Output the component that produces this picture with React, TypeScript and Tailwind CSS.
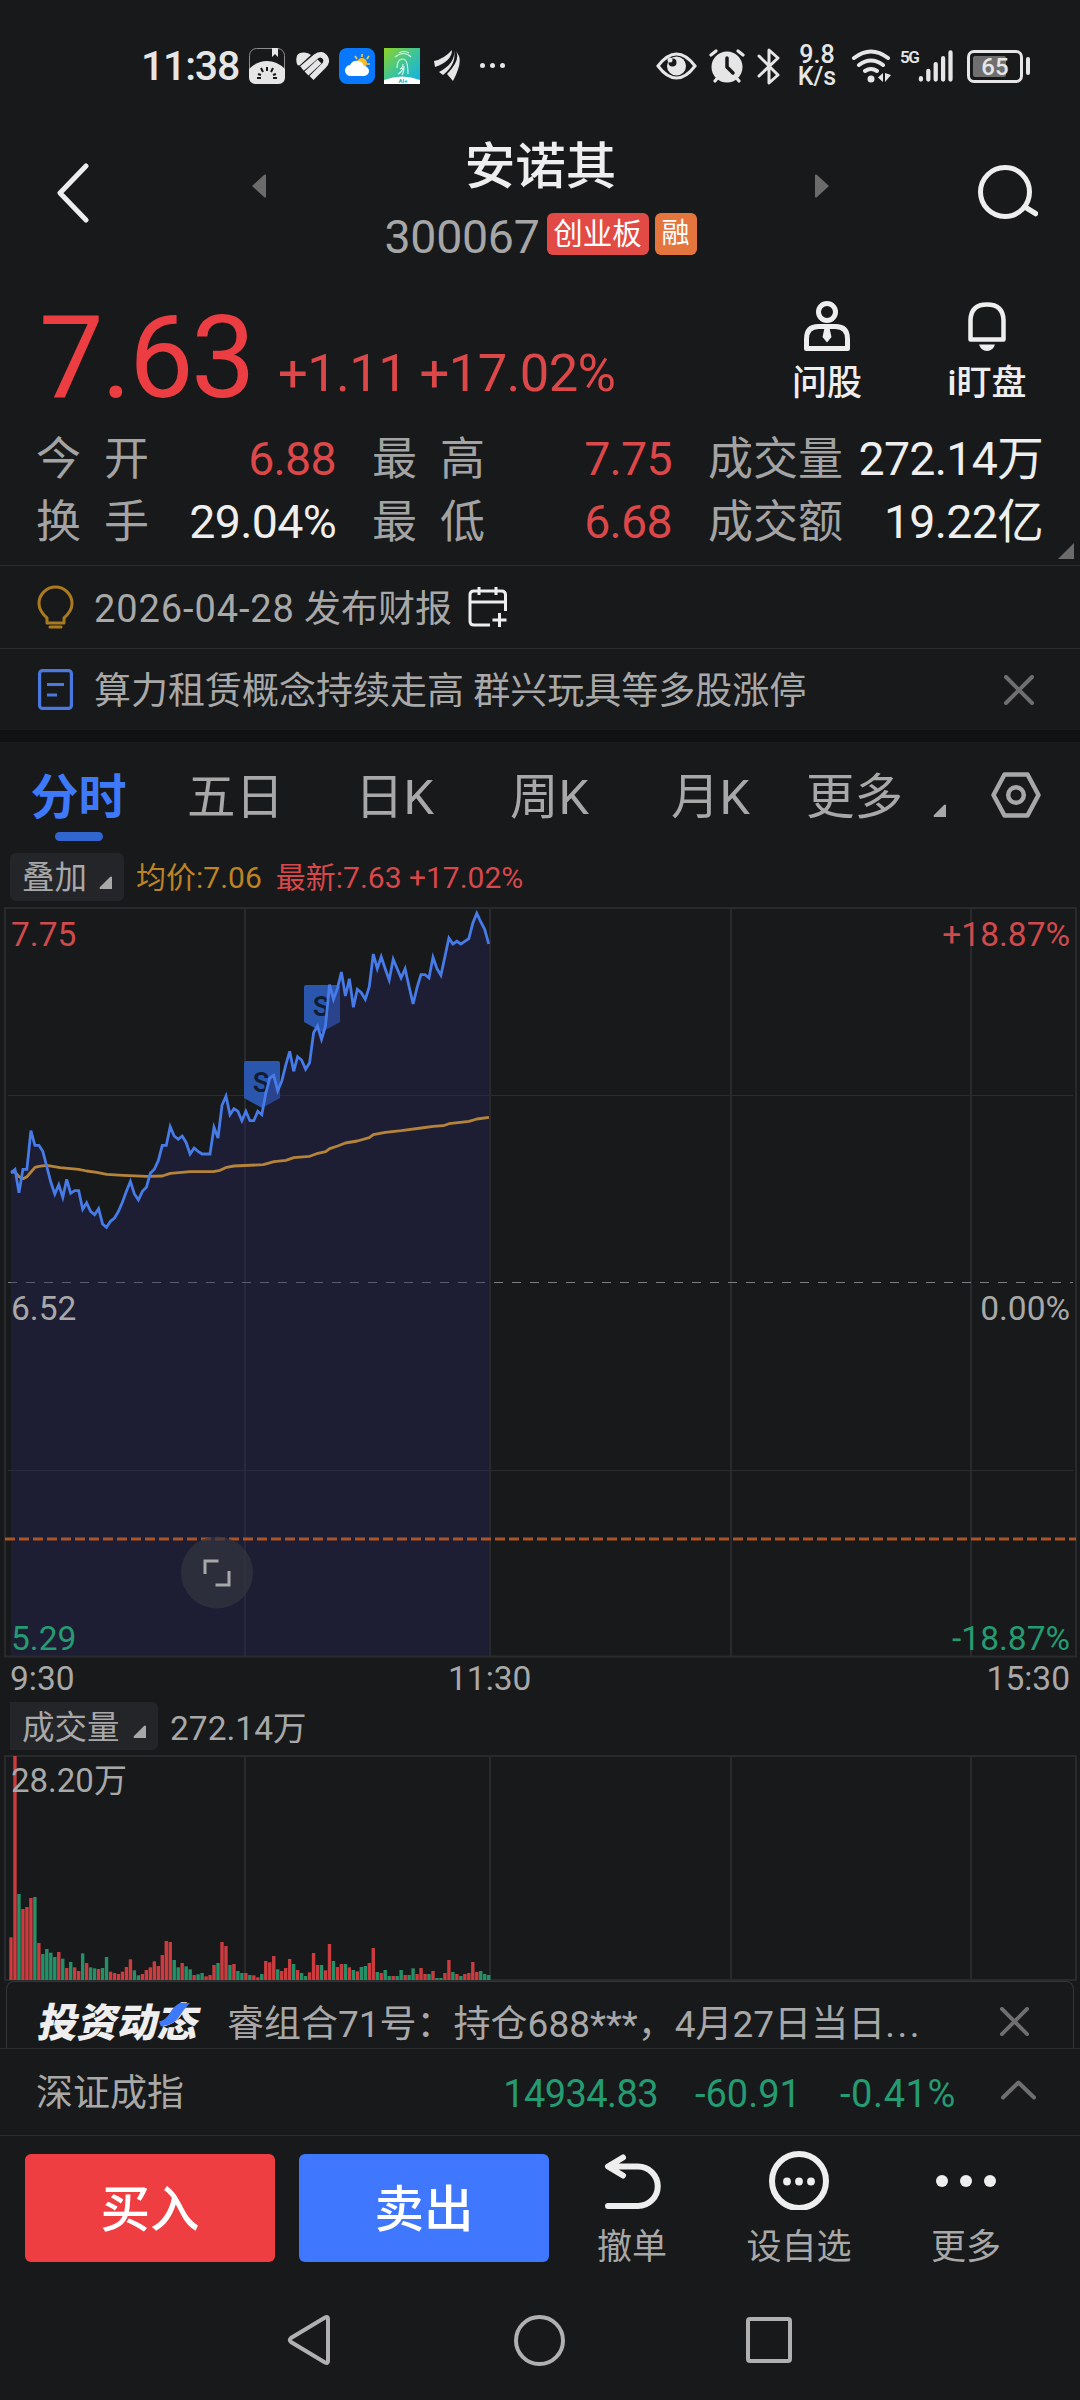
import type { ReactNode } from "react";

// one value per minute, 9:30 → 11:30, in thirds of a pixel below the plot origin
const PRICE = [
  848, 838, 908, 838, 838, 722, 766, 766, 784, 830, 876, 912, 884, 922, 868, 910, 902, 902, 958, 938, 964, 974, 956,
  1002, 1012, 994, 984, 964, 936, 904, 874, 912, 930, 904, 892, 850, 838, 812, 766, 766, 710, 738, 748, 738, 758, 792,
  774, 784, 792, 792, 792, 712, 744, 646, 618, 674, 656, 664, 692, 664, 692, 692, 664, 674, 610, 564, 556, 602, 574,
  526, 484, 544, 500, 510, 538, 518, 428, 408, 448, 408, 284, 328, 296, 246, 318, 266, 352, 298, 308, 328, 290, 192,
  236, 200, 236, 270, 208, 236, 264, 236, 290, 342, 292, 254, 254, 264, 202, 236, 256, 200, 144, 162, 154, 162, 154,
  146, 100, 70, 96, 118, 162,
];

const AVERAGE = [
  [33, 846], [45, 846], [57, 860], [69, 866], [81, 860], [93, 846], [105, 832], [117, 829], [140, 826], [180, 833],
  [236, 838], [260, 843], [290, 847], [320, 853], [370, 856], [440, 859], [487, 858], [511, 850], [571, 845],
  [640, 845], [660, 841], [680, 832], [702, 828], [790, 824], [822, 815], [858, 811], [881, 803], [929, 799],
  [950, 791], [977, 785], [989, 776], [1013, 768], [1036, 759], [1072, 753], [1108, 743], [1120, 734], [1156, 727],
  [1204, 722], [1264, 714], [1300, 709], [1330, 707], [1347, 701], [1407, 694], [1431, 687], [1467, 682],
];

const VOLUME =
  "r592 r48 g462 r507 r501 r474 g471 r609 g642 g627 g638 g651 r636 g656 r684 g666 r682 r693 g640 r669 g682 g685 r687 g684 g651 r695 r699 r702 r695 r681 r658 g691 g706 r702 r690 r682 r664 r678 r645 r603 r606 g660 g682 r669 g679 g688 r705 g703 g699 r709 r705 r675 g669 r606 r618 g675 r672 g693 g699 r699 g705 r706 r712 g702 r663 r667 r648 g688 r693 r684 r657 g672 r690 g699 g708 r697 r639 r675 g675 r691 r612 g663 r681 r672 g672 r682 g690 r694 g681 g678 r669 r624 g696 r699 g690 g708 r708 g708 g690 r705 g705 g685 r702 r684 r702 g702 r693 g714 g714 r699 r660 g696 r702 g708 r702 r699 r666 r696 g693 g702 g705".split(
    " ",
  );

const STEP = 3.981;
const GRID_X = [245, 490, 731, 971];

const TABS = [
  { label: "五日", width: "w-[168px]" },
  { label: "日K", width: "w-[155px]" },
  { label: "周K", width: "w-[161px]" },
  { label: "月K", width: "w-[135px]" },
  { label: "更多", width: "w-[127px]" },
];

function minuteX(index: number) {
  return 11 + index * STEP;
}

function StatusBar() {
  return (
    <div className="flex h-[132px] items-center pl-[141px] pr-[50px] text-[#e6e6e6]">
      <span className="w-[100px] text-[41px] font-medium leading-none tracking-[-1.200px]">11:38</span>
      <svg className="ml-2 shrink-0" width="36" height="36" viewBox="0 0 36 36">
        <rect x="0.5" y="0.5" width="35" height="35" rx="7" fill="none" stroke="#8d8d8d" />
        <path d="M23 0h6v9l-3-3-3 3z" fill="#e6e6e6" />
        <path d="M0 21Q8 13 18 13t18 8v8q0 7-7 7H7q-7 0-7-7z" fill="#e6e6e6" />
        <path d="M18 19v4M12 20l2 4M24 20l-2 4M9 26l3 1M27 26l-3 1M8 30h4M24 30h4" stroke="#17191a" strokeWidth="2" />
      </svg>
      <svg className="ml-[11px] shrink-0" width="33" height="28" viewBox="0 0 33 28">
        <path d="M1 12Q-2 1 7 0.500q5-.5 8 2.500L3.500 13.500q-2 0-2.500-1.500z" fill="#e6e6e6" />
        <g fill="none" stroke="#e6e6e6" strokeWidth="5.600">
          <path d="M6 16.500L20 4.500q6-4 9.500 1.500 2 4-1.500 7.500L15.500 26" />
          <path d="M10.500 21.500L23.500 9.500" />
        </g>
      </svg>
      <svg className="ml-[10px] shrink-0" width="36" height="36" viewBox="0 0 36 36">
        <rect width="36" height="36" rx="8" fill="#0878ff" />
        <g stroke="#f7c948" strokeWidth="1.600">
          <path d="M23 6v3M16 8l2 3M30 8l-2 3M28 16h3" />
        </g>
        <circle cx="23" cy="15" r="5" fill="#fbbf24" />
        <path d="M12 28a5.500 5.500 0 0 1-1-11 7.500 7.500 0 0 1 14 1 5 5 0 0 1 0 10z" fill="#fff" />
      </svg>
      <svg className="ml-[9px] shrink-0" width="36" height="36" viewBox="0 0 36 36">
        <defs>
          <linearGradient id="scan" x1="0" y1="0" x2="1" y2="1">
            <stop offset="0" stopColor="#8fd424" />
            <stop offset="0.500" stopColor="#3cc49a" />
            <stop offset="1" stopColor="#10aef0" />
          </linearGradient>
        </defs>
        <rect width="36" height="36" fill="url(#scan)" />
        <path d="M0 32Q18 25 36 32v4H0z" fill="#fff" />
        <g fill="none" stroke="#d9f7ec" strokeWidth="1.100">
          <path d="M15 5q5-3 10 0M11 9q9-7 16 0M13 20q0-9 6-9 5 0 5 15M16 21q3-1 3-5M14 26q4-2 5-6M20 18q0 6-2 9" />
        </g>
        <text x="19" y="35" fontSize="6" fontWeight="700" fill="#2aa7b8" textAnchor="middle">AI+</text>
      </svg>
      <svg className="ml-[14px] shrink-0" width="27" height="32" viewBox="0 0 27 32" fill="#e6e6e6">
        <path d="M0 11Q10 9 18 0q0 11-17 17z" />
        <path d="M20 0q2 13-15 22l4 3Q23 14 20 0z" />
        <path d="M22 1q5 9-9 23l6 7q9-17 6-25z" />
      </svg>
      <div className="ml-[19px] mt-[-2px] flex gap-[5px]">
        <i className="h-[5px] w-[5px] rounded-full bg-[#e6e6e6]" />
        <i className="h-[5px] w-[5px] rounded-full bg-[#e6e6e6]" />
        <i className="h-[5px] w-[5px] rounded-full bg-[#e6e6e6]" />
      </div>

      <div className="ml-auto flex items-center">
        <svg width="41" height="28" viewBox="0 0 41 28">
          <path d="M2 14Q11 2 20.500 2T39 14Q30 26 20.500 26T2 14z" fill="none" stroke="#e6e6e6" strokeWidth="3" />
          <circle cx="20.500" cy="14" r="9.500" fill="#e6e6e6" />
          <circle cx="16.500" cy="10.500" r="4" fill="#17191a" />
          <circle cx="14" cy="8" r="2.500" fill="#e6e6e6" />
        </svg>
        <svg className="ml-[12px]" width="36" height="34" viewBox="0 0 36 34">
          <circle cx="18" cy="18" r="15.500" fill="#e6e6e6" />
          <path d="M2 6l5-4M34 6l-5-4M6 32l4-5M30 32l-4-5" stroke="#e6e6e6" strokeWidth="3.200" strokeLinecap="round" />
          <path d="M18 9v9l6 6" fill="none" stroke="#17191a" strokeWidth="3.500" strokeLinecap="round" />
        </svg>
        <svg className="ml-[12px]" width="23" height="37" viewBox="0 0 23 37" fill="none" stroke="#e6e6e6" strokeWidth="3">
          <path d="M2 8l19 19-9 8V2l9 8L2 28" strokeLinecap="round" strokeLinejoin="round" />
        </svg>
        <div className="ml-[17px] w-[40px] text-center text-[25px] font-medium leading-[22px]">
          <div>9.8</div>
          <div>K/s</div>
        </div>
        <svg className="ml-[14px]" width="42" height="34" viewBox="0 0 42 34">
          <g fill="none" stroke="#e6e6e6" strokeWidth="4" strokeLinecap="round">
            <path d="M3 9Q20-4 37 9M8 16q12-9 24 0M14 22q6-4 12 0" />
          </g>
          <circle cx="20" cy="30" r="3.500" fill="#e6e6e6" />
          <path d="M32 24v9l-5-4.500zM34 24l6 2-6 7z" fill="#e6e6e6" />
        </svg>
        <div className="ml-[7px] flex w-[54px] items-start justify-between">
          <span className="w-[18px] whitespace-nowrap text-[17px] font-semibold leading-[18px] tracking-[-1.500px]">5G</span>
          <svg width="37" height="36" viewBox="0 0 37 36" stroke="#e6e6e6" strokeWidth="4.400" strokeLinecap="round">
            <path d="M3 30.500v1.500M10.600 23v9M18.200 16v16M25.800 10v22M33.400 4v28" />
          </svg>
        </div>
        <div className="ml-[13px] flex items-center">
          <div className="relative h-[33px] w-[56px] rounded-[7px] border-[3px] border-[#e6e6e6] p-[3px]">
            <div className="h-full w-[33px] rounded-[2px] bg-[#6f6f6f]" />
            <span className="absolute inset-0 text-center text-[24px] font-medium leading-[28px]">65</span>
          </div>
          <div className="ml-[3px] h-[18px] w-[4px] rounded-full bg-[#e6e6e6]" />
        </div>
      </div>
    </div>
  );
}

function Header() {
  return (
    <div className="flex h-[138px] pl-[56px] pr-[42px]">
      <svg className="mt-[31px]" width="34" height="60" viewBox="0 0 34 60" fill="none" stroke="#eee" strokeWidth="5">
        <path d="M30 3L4 30l26 27" strokeLinecap="round" strokeLinejoin="round" />
      </svg>
      <svg className="ml-[162px] mt-[42px]" width="14" height="24" viewBox="0 0 14 24">
        <path d="M14 1v22q-1 1-2 0L0 12 12 1q1-1 2 0z" fill="#6b6b6b" />
      </svg>
      <div className="flex w-[549px] flex-col items-center">
        <div className="mt-[9px] text-[50.500px] font-medium leading-[52px] text-[#eee]">安诺其</div>
        <div className="mt-[20px] flex h-[42px] items-start">
          <span className="mt-[3px] text-[46.500px] leading-[42px] tracking-[-0.300px] text-[#a6a6a6]">300067</span>
          <span className="ml-[7px] h-[42px] w-[102px] rounded-[6px] bg-[#e14a45] text-center text-[29.500px] leading-[42px] text-white">
            创业板
          </span>
          <span className="ml-[6px] h-[42px] w-[42px] rounded-[6px] bg-[#e4753c] text-center text-[28px] leading-[42px] text-white">
            融
          </span>
        </div>
      </div>
      <svg className="mt-[42px]" width="14" height="24" viewBox="0 0 14 24">
        <path d="M0 1v22q1 1 2 0l12-11L2 1Q1 0 0 1z" fill="#6b6b6b" />
      </svg>
      <svg className="ml-auto mt-[33px]" width="60" height="54" viewBox="0 0 60 54" fill="none" stroke="#eee">
        <circle cx="27" cy="27" r="24.500" strokeWidth="5" />
        <path d="M47 42l10.500 6.500" strokeWidth="5.500" strokeLinecap="round" />
      </svg>
    </div>
  );
}

function QuoteAction({ label, className, children }: { label: string; className: string; children: ReactNode }) {
  return (
    <div className={`flex flex-col items-center ${className}`}>
      {children}
      <span className="mt-[14px] whitespace-nowrap text-[35px] font-medium leading-[38px] text-[#eee]">{label}</span>
    </div>
  );
}

function Stat({ label, value, tone, width }: { label: string; value: string; tone: string; width: string }) {
  return (
    <div className={`flex items-center justify-between whitespace-nowrap ${width}`}>
      <span className="flex w-[113px] shrink-0 justify-between text-[45px] text-[#a3a3a3]">
        {label.length === 2 ? label.split("").map((char) => <i key={char} className="not-italic">{char}</i>) : label}
      </span>
      <span className={`text-[46.500px] tracking-[-0.700px] ${tone}`}>{value}</span>
    </div>
  );
}

function Quote() {
  return (
    <section className="relative h-[296px] border-b border-[#2a2c2e]">
      <div className="flex h-[158px] pl-[39px]">
        <div className="mt-[30px] w-[239px] text-[115px] leading-[116px] tracking-[-2.500px] text-[#ec3e42]">7.63</div>
        <div className="mt-[73px] w-[340px] whitespace-nowrap text-[52.500px] leading-[60px] tracking-[-0.600px] text-[#dc4749]">
          +1.11 +17.02%
        </div>
        <QuoteAction label="问股" className="ml-[169px] mt-[31px] w-[80px]">
          <svg width="46" height="50" viewBox="0 0 46 50" fill="none" stroke="#eee" strokeWidth="5">
            <circle cx="23" cy="11" r="8.500" />
            <path d="M2.500 47.500V38q0-12.500 12-12.500h17q12 0 12 12.500v9.500z" strokeLinejoin="round" />
            <path d="M20.500 27h5l2 9-4.500 5.500L18.500 36z" fill="#eee" stroke="none" />
          </svg>
        </QuoteAction>
        <QuoteAction label="i盯盘" className="ml-[80px] mt-[31px] w-[80px]">
          <svg width="38" height="50" viewBox="0 0 38 50" fill="none" stroke="#eee" strokeWidth="4.500">
            <path d="M2.500 38.500V19Q3 3.500 19 3.500T35.500 19v19.500z" strokeLinejoin="round" />
            <path d="M11 43.500h16q-2 6.500-8 6.500t-8-6.500z" fill="#eee" stroke="none" />
          </svg>
        </QuoteAction>
      </div>
      <div className="flex h-[126px] flex-col pl-[36px] leading-[63px]">
        <div className="flex">
          <Stat label="今开" value="6.88" tone="text-[#dc4749]" width="w-[300px]" />
          <Stat label="最高" value="7.75" tone="text-[#dc4749]" width="ml-[36px] w-[300px]" />
          <Stat label="成交量" value="272.14万" tone="text-[#eee]" width="ml-[36px] w-[335px]" />
        </div>
        <div className="flex">
          <Stat label="换手" value="29.04%" tone="text-[#eee]" width="w-[300px]" />
          <Stat label="最低" value="6.68" tone="text-[#dc4749]" width="ml-[36px] w-[300px]" />
          <Stat label="成交额" value="19.22亿" tone="text-[#eee]" width="ml-[36px] w-[335px]" />
        </div>
      </div>
      <svg className="absolute bottom-[6px] right-[6px]" width="16" height="16" viewBox="0 0 16 16">
        <path d="M16 0v16H0z" fill="#6b6b6b" />
      </svg>
    </section>
  );
}

function CloseIcon({ size }: { size: number }) {
  return (
    <svg width={size} height={size} viewBox="0 0 30 30" stroke="#6f6f6f" strokeWidth="4" strokeLinecap="round">
      <path d="M2 2l26 26M28 2L2 28" />
    </svg>
  );
}

function News() {
  return (
    <section className="text-[37px] text-[#a8a8a8]">
      <div className="flex h-[83px] items-center border-b border-[#2a2c2e] pl-[37px]">
        <svg width="37" height="44" viewBox="0 0 37 44" fill="none" stroke="#ab7a1e" strokeWidth="3" strokeLinecap="round">
          <path d="M10 38v-5Q2 26 2 18.500a16.500 16.500 0 0 1 33 0Q35 26 27 33v5zM13 42h11" strokeLinejoin="round" />
        </svg>
        <span className="ml-[20px] mt-[3px] leading-none">
          <span className="text-[38px] tracking-[0.900px]">2026-04-28</span> 发布财报
        </span>
        <svg className="ml-[16px]" width="40" height="42" viewBox="0 0 40 42" fill="none" stroke="#eee" strokeWidth="3">
          <path d="M37.500 25V9q0-4-4-4H6Q2 5 2 9v26q0 4 4 4h16M2 16h35.500M11 1v8M28 1v8M31.500 27v14M24.500 34h14" />
        </svg>
      </div>
      <div className="flex h-[81px] items-center pl-[38px] pr-[46px]">
        <svg width="35" height="41" viewBox="0 0 35 41" fill="none" stroke="#4a78e0" strokeWidth="3.200">
          <rect x="1.600" y="1.600" width="31.800" height="37.800" rx="3" />
          <path d="M9 15.500h17M9 26h10" />
        </svg>
        <span className="ml-[21px] mt-[3px] leading-none">算力租赁概念持续走高 群兴玩具等多股涨停</span>
        <span className="ml-auto">
          <CloseIcon size={30} />
        </span>
      </div>
      <div className="h-[12px] bg-[#101113]" />
    </section>
  );
}

function Corner() {
  return (
    <svg width="13" height="13" viewBox="0 0 13 13">
      <path d="M13 1v12H1q-1-1 0-2L11 1q1-1 2 0z" fill="#a8a8a8" />
    </svg>
  );
}

function Tabs() {
  return (
    <nav className="flex h-[108px] whitespace-nowrap pl-[31px] pt-[26px] text-[48.500px] leading-[60px] text-[#a8a8a8]">
      <div className="flex w-[95px] flex-col items-center text-[48px] font-bold text-[#3f79fb]">
        分时
        <i className="mt-[4px] h-[9px] w-[48px] rounded-full bg-[#3166d0]" />
      </div>
      <div className="ml-[61px] flex">
        {TABS.map((tab) => (
          <div key={tab.label} className={tab.width}>
            {tab.label}
          </div>
        ))}
      </div>
      <span className="mt-[36px] leading-none">
        <Corner />
      </span>
      <svg className="ml-[45px] mt-[4px]" width="50" height="46" viewBox="0 0 50 46" fill="none" stroke="#a8a8a8" strokeWidth="4.500">
        <path d="M13.500 2.500h23L47.500 23l-11 20.500h-23L2.500 23z" strokeLinejoin="round" />
        <circle cx="25" cy="23" r="7.800" />
      </svg>
    </nav>
  );
}

function Marker({ x, y }: { x: number; y: number }) {
  return (
    <g transform={`translate(${x} ${y})`}>
      <path d="M2 0h32q2 0 2 2v35L18 47 0 37V2q0-2 2-2z" fill="#2a57ad" />
      <text x="17" y="31" fontSize="27" fontWeight="600" fill="#111c33" textAnchor="middle">
        S
      </text>
    </g>
  );
}

function PriceChart() {
  const line = PRICE.map((y, i) => `${minuteX(i).toFixed(1)},${((y - 51) / 3).toFixed(1)}`).join(" ");
  const average = AVERAGE.map(([x, y]) => `${(x / 3).toFixed(1)},${((y - 51) / 3).toFixed(1)}`).join(" ");

  return (
    <div className="relative h-[751px] text-[33.500px] leading-none text-[#a8a8a8]">
      <svg width="1080" height="751" viewBox="0 0 1080 751" fill="none">
        <rect x="5" y="1" width="1071" height="748.500" stroke="#282a2d" strokeWidth="2" />
        <path d="M8 188.500H1073M8 563.500H1073" stroke="#2a2c2e" />
        {GRID_X.map((x) => (
          <path key={x} d={`M${x} 1V749`} stroke="#282a2d" strokeWidth="2" />
        ))}
        <path d="M8 375.500H1073" stroke="#7b7f83" strokeDasharray="9 9" />
        <Marker x={244} y={154} />
        <Marker x={304} y={78} />
        <polygon points={`11,749 ${line} 488.700,749`} fill="#28265a" fillOpacity="0.400" />
        <polyline points={average} stroke="#b5843a" strokeWidth="2.800" strokeLinejoin="round" />
        <polyline points={line} stroke="#467be8" strokeWidth="2.800" />
        <path d="M5 632H1076" stroke="#ab5428" strokeWidth="3" strokeDasharray="10 4" />
        <circle cx="217" cy="665.500" r="36" fill="#34343f" fillOpacity="0.700" />
        <path d="M205 667v-13h13.500M215.500 678H229v-14" stroke="#a8a8a8" strokeWidth="3" />
      </svg>
      <span className="absolute left-[11px] top-[11px] text-[#cf4a4c]">7.75</span>
      <span className="absolute right-[10px] top-[11px] text-[#cf4a4c]">+18.87%</span>
      <span className="absolute left-[11px] top-[385px]">6.52</span>
      <span className="absolute right-[10px] top-[385px]">0.00%</span>
      <span className="absolute bottom-[3px] left-[11px] text-[#259b72]">5.29</span>
      <span className="absolute bottom-[3px] right-[10px] text-[#259b72]">-18.87%</span>
    </div>
  );
}

function VolumeChart() {
  return (
    <div className="relative h-[226px]">
      <svg width="1080" height="226" viewBox="0 0 1080 226" fill="none">
        <rect x="5" y="1" width="1071" height="224" stroke="#282a2d" strokeWidth="2" />
        {GRID_X.map((x) => (
          <path key={x} d={`M${x} 1V225`} stroke="#282a2d" strokeWidth="2" />
        ))}
        {VOLUME.map((entry, i) => {
          const height = (720 - Number(entry.slice(1))) / 3;
          return (
            <rect
              key={i}
              x={minuteX(i) - 1.7}
              y={225 - height}
              width="3.400"
              height={height}
              fill={entry[0] === "r" ? "#cb3c3f" : "#259068"}
            />
          );
        })}
      </svg>
      <span className="absolute left-[11px] top-[9px] text-[33px] leading-none text-[#a8a8a8]">28.20万</span>
    </div>
  );
}

function Chart() {
  return (
    <section>
      <div className="flex h-[57px] items-center pb-[3px] pl-[10px] text-[30px] leading-none">
        <div className="flex h-[48px] w-[114px] items-center rounded-[6px] bg-[#242529] pl-[12px] text-[32.500px] text-[#a8a8a8]">
          <span className="mt-[3px]">叠加</span>
          <span className="ml-[12px] mt-[11px]">
            <Corner />
          </span>
        </div>
        <span className="ml-[12px] mt-[2px] text-[#bd8324]">均价:7.06</span>
        <span className="ml-[14px] mt-[2px] text-[#d8474a]">最新:7.63 +17.02%</span>
      </div>
      <PriceChart />
      <div className="flex h-[44px] items-center px-[10px] pb-[2px] text-[33.500px] leading-none text-[#a8a8a8]">
        <span className="w-[438px]">9:30</span>
        <span>11:30</span>
        <span className="ml-auto">15:30</span>
      </div>
      <div className="flex h-[53px] items-start pl-[10px] text-[33px] leading-[48px] text-[#a8a8a8]">
        <div className="flex h-[48px] w-[148px] items-center rounded-r-[6px] bg-[#242529] pl-[12px] text-[32.500px]">
          <span className="mt-[4px]">成交量</span>
          <span className="ml-[13px] mt-[11px] leading-none">
            <Corner />
          </span>
        </div>
        <span className="ml-[12px] mt-[3px] text-[33.500px]">272.14万</span>
      </div>
      <VolumeChart />
    </section>
  );
}

function Ticker() {
  return (
    <div className="h-[68px] border-b border-[#2a2c2e] px-[6px]">
      <div className="flex h-[67px] items-center rounded-t-[8px] border border-b-0 border-[#333538] pl-[32px] pr-[44px] pt-[15px] text-[37px] leading-none text-[#a8a8a8]">
        <div className="relative mt-[2px] w-[165px] -skew-x-12 whitespace-nowrap text-[40px] font-black text-[#eee]">
          投资动态
          <svg className="absolute left-[118px] top-[-1px] skew-x-12" width="34" height="24" viewBox="0 0 34 24">
            <path d="M0 18.500Q7 17 11 10T21 0h10Q25 6 20 14T2 23.500z" fill="#3f79fb" />
          </svg>
        </div>
        <span className="ml-[23px] mt-[3px] whitespace-nowrap">
          睿组合71号：持仓688***，4月27日当日<span className="tracking-[2.500px]">...</span>
        </span>
        <span className="ml-auto mt-[-2px]">
          <CloseIcon size={29} />
        </span>
      </div>
    </div>
  );
}

function IndexRow() {
  return (
    <div className="flex h-[87px] items-center border-b border-[#2a2c2e] pl-[36px] pr-[44px] text-[38px] leading-none text-[#259b72]">
      <span className="mt-[3px] text-[37px] text-[#a8a8a8]">深证成指</span>
      <span className="ml-auto mt-[4px] tracking-[-0.600px]">14934.83</span>
      <span className="ml-[37px] mt-[4px]">-60.91</span>
      <span className="ml-[39px] mt-[4px] tracking-[0.600px]">-0.41%</span>
      <svg className="mb-[4px] ml-[45px]" width="35" height="20" viewBox="0 0 35 20" fill="none" stroke="#6f6f6f" strokeWidth="4">
        <path d="M2 17.500L17.500 2.500 33 17.500" strokeLinecap="round" strokeLinejoin="round" />
      </svg>
    </div>
  );
}

function TradeAction({ label, className, children }: { label: string; className: string; children: ReactNode }) {
  return (
    <div className={`flex flex-col items-center text-[35px] text-[#a8a8a8] ${className}`}>
      {children}
      <span className="mt-[18px] whitespace-nowrap leading-[40px]">{label}</span>
    </div>
  );
}

function TradeBar() {
  return (
    <div className="flex h-[144px] pl-[25px] pt-[18px]">
      <button className="h-[108px] w-[250px] rounded-[6px] bg-[#ee3e42] pt-[5px] text-[49.500px] font-medium text-white">买入</button>
      <button className="ml-[24px] h-[108px] w-[250px] rounded-[6px] bg-[#3f78ff] pt-[5px] text-[49.500px] font-medium text-white">
        卖出
      </button>
      <TradeAction label="撤单" className="ml-[43px] w-[80px]">
        <svg className="ml-[2px]" width="58" height="56" viewBox="0 0 58 56" fill="none" stroke="#eee" strokeWidth="6">
          <path d="M19 3.500L4 12.500l15 9M5 12.500h29a19.500 19.500 0 0 1 0 39.500H4" strokeLinecap="round" strokeLinejoin="round" />
        </svg>
      </TradeAction>
      <TradeAction label="设自选" className="ml-[73px] w-[108px]">
        <svg className="-mt-[4px]" width="60" height="60" viewBox="0 0 60 60" fill="#eee">
          <circle cx="30" cy="31" r="27" fill="none" stroke="#eee" strokeWidth="6" />
          <circle cx="18" cy="31.500" r="3.900" />
          <circle cx="30" cy="31.500" r="3.900" />
          <circle cx="42" cy="31.500" r="3.900" />
        </svg>
      </TradeAction>
      <TradeAction label="更多" className="ml-[73px] w-[80px]">
        <svg width="60" height="56" viewBox="0 0 60 56" fill="#eee">
          <circle cx="6" cy="27" r="6" />
          <circle cx="30" cy="27" r="6" />
          <circle cx="54" cy="27" r="6" />
        </svg>
      </TradeAction>
    </div>
  );
}

function SystemNav() {
  return (
    <div className="flex h-[120px] items-center pl-[287px]">
      <svg width="44" height="52" viewBox="0 0 44 52" fill="none" stroke="#b0b0b0" strokeWidth="4">
        <path d="M41 5v42q0 3-3 1.500L4 28q-2.500-2 0-4L38 3.500Q41 2 41 5z" />
      </svg>
      <div className="ml-[183px] h-[51px] w-[51px] rounded-full border-[4px] border-[#b0b0b0]" />
      <div className="ml-[181px] h-[46px] w-[46px] rounded-[4px] border-[4px] border-[#b0b0b0]" />
    </div>
  );
}

export default function App() {
  return (
    <main className="h-[2400px] w-[1080px] overflow-hidden bg-[#17191a] font-[Roboto,'Noto_Sans_CJK_SC',sans-serif]">
      <StatusBar />
      <Header />
      <Quote />
      <News />
      <Tabs />
      <Chart />
      <Ticker />
      <IndexRow />
      <TradeBar />
      <SystemNav />
    </main>
  );
}
